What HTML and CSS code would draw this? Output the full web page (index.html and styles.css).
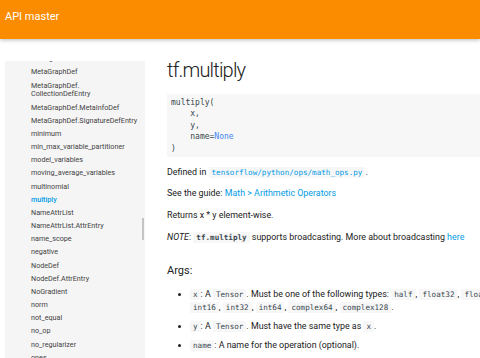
FILE: index.html
```html
<!DOCTYPE html>
<html>
<head>
<meta charset="utf-8">
<link rel="stylesheet" href="styles.css">
</head>
<body>
<header class="topbar"><span class="brand">API master</span></header>
<div class="page">
  <nav class="sidebar">
    <ul class="toc">
      <li class="clipped">meshgrid</li>
      <li>MetaGraphDef</li>
      <li>MetaGraphDef.<br>CollectionDefEntry</li>
      <li>MetaGraphDef.MetaInfoDef</li>
      <li>MetaGraphDef.SignatureDefEntry</li>
      <li>minimum</li>
      <li>min_max_variable_partitioner</li>
      <li>model_variables</li>
      <li>moving_average_variables</li>
      <li>multinomial</li>
      <li class="active">multiply</li>
      <li>NameAttrList</li>
      <li>NameAttrList.AttrEntry</li>
      <li>name_scope</li>
      <li>negative</li>
      <li>NodeDef</li>
      <li>NodeDef.AttrEntry</li>
      <li>NoGradient</li>
      <li>norm</li>
      <li>not_equal</li>
      <li>no_op</li>
      <li>no_regularizer</li>
      <li>ones</li>
    </ul>
    <div class="thumb"></div>
  </nav>
  <main class="content">
    <h1 class="title">tf.multiply</h1>
    <pre class="signature">multiply(
    x,
    y,
    name=<span class="kw">None</span>
)</pre>
    <p>Defined in <code class="link">tensorflow/python/ops/math_ops.py</code>.</p>
    <p>See the guide: <a class="link">Math &gt; Arithmetic Operators</a></p>
    <p>Returns x * y element-wise.</p>
    <p><em>NOTE</em>: <code class="strong">tf.multiply</code> supports broadcasting. More about broadcasting <a class="link">here</a></p>
    <h4 class="args">Args:</h4>
    <ul class="arglist">
      <li><code>x</code>: A <code>Tensor</code>. Must be one of the following types: <code>half</code>, <code>float32</code>, <code>float64</code>, <code>int16</code>, <code>int32</code>, <code>int64</code>, <code>complex64</code>, <code>complex128</code>.</li>
      <li><code>y</code>: A <code>Tensor</code>. Must have the same type as <code>x</code>.</li>
      <li><code>name</code>: A name for the operation (optional).</li>
    </ul>
  </main>
</div>
</body>
</html>
```

FILE: styles.css
```css
html, body {
  margin: 0;
  padding: 0;
  background: #fff;
  overflow: hidden;
  font-family: Roboto, "Noto Sans", sans-serif;
  color: #212121;
}

.topbar {
  height: 39px;
  background: #fb8c00;
  box-shadow: 0 1px 4px rgba(0, 0, 0, 0.28);
  display: flex;
  align-items: center;
  padding: 0 5px 6px;
  box-sizing: border-box;
  position: relative;
  z-index: 1;
}

.brand {
  color: #fff;
  font-size: 11px;
  font-weight: 400;
}

.page {
  display: flex;
  height: 319px;
  width: 660px;
}

.sidebar {
  position: relative;
  flex: 0 0 140px;
  margin: 22px 0 0 5px;
  background: #f5f5f5;
  overflow: hidden;
}

.toc {
  list-style: none;
  margin: -8px 0 0;
  padding: 0 4px 0 26px;
  font-size: 7.2px;
  line-height: 8.8px;
  color: #424242;
}

.toc li {
  padding: 2.2px 0;
  white-space: nowrap;
}

.toc li.active {
  color: #039be5;
  font-weight: 500;
}

.thumb {
  position: absolute;
  right: 1px;
  top: 157px;
  width: 2px;
  height: 22px;
  background: #c4c4c4;
}

.content {
  margin-left: 22px;
  flex: 0 0 345px;
}

.title {
  margin: 18px 0 11px;
  font-size: 20px;
  letter-spacing: -0.8px;
  line-height: 26px;
  font-weight: 300;
  color: #212121;
}

.signature {
  margin: 0 -200px 0 0;
  padding: 3px 4px;
  background: #f7f7f7;
  font-family: "DejaVu Sans Mono", monospace;
  font-size: 8px;
  line-height: 11.4px;
  color: #37474f;
}

.kw {
  color: #4285f4;
}

p {
  margin: 8.7px 0;
  font-size: 8.9px;
  line-height: 13px;
}

code {
  font-family: "DejaVu Sans Mono", monospace;
  font-size: 7.6px;
  background: #f7f7f7;
  padding: 1px 3px;
  color: #37474f;
}

code.link {
  color: #039be5;
  font-weight: 500;
}

code.strong {
  font-weight: 700;
}

.link {
  color: #039be5;
}

em {
  font-style: italic;
}

.args {
  margin: 20px 0 10px;
  font-size: 11px;
  line-height: 14px;
  font-weight: 400;
}

.arglist {
  margin: 0;
  padding-left: 23px;
  font-size: 8.9px;
  line-height: 12.7px;
}

.arglist li {
  margin-bottom: 5px;
}
```
